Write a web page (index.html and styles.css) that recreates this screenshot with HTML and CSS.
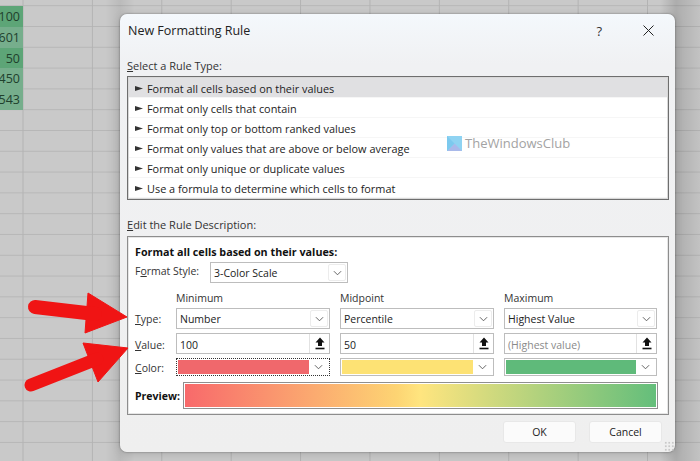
FILE: index.html
```html
<!DOCTYPE html>
<html lang="en">
<head>
<meta charset="utf-8">
<title>New Formatting Rule</title>
<link rel="stylesheet" href="styles.css">
</head>
<body>
<svg width="0" height="0" class="defs">
  <symbol id="chev" viewBox="0 0 10 6"><path d="M1 1l4 4 4-4" fill="none" stroke="#555" stroke-width="1"/></symbol>
  <symbol id="up" viewBox="0 0 10 13"><path d="M5 0.5L9.5 5.5H7V9H3V5.5H0.5Z" fill="#111"/><rect x="0.5" y="10.7" width="9" height="1.6" fill="#111"/></symbol>
</svg>
<main class="sheet">
  <div class="cells">
    <div class="cell dark">100</div>
    <div class="cell">601</div>
    <div class="cell dark">50</div>
    <div class="cell">450</div>
    <div class="cell">543</div>
  </div>
</main>
<section class="dialog">
  <header class="titlebar">
    <span class="title">New Formatting Rule</span>
    <span class="help">?</span>
    <svg class="close" width="11" height="11" viewBox="0 0 11 11"><path d="M0.5 0.5l10 10M10.5 0.5l-10 10" stroke="#222" stroke-width="1"/></svg>
  </header>
  <div class="label"><u>S</u>elect a Rule Type:</div>
  <ul class="rules">
    <li class="rule selected">Format all cells based on their values</li>
    <li class="rule">Format only cells that contain</li>
    <li class="rule">Format only top or bottom ranked values</li>
    <li class="rule">Format only values that are above or below average</li>
    <li class="rule">Format only unique or duplicate values</li>
    <li class="rule">Use a formula to determine which cells to format</li>
  </ul>
  <div class="label second"><u>E</u>dit the Rule Description:</div>
  <div class="desc">
    <div class="desc-title">Format all cells based on their values:</div>
    <div class="style-row">
      <span>F<u>o</u>rmat Style:</span>
      <div class="select style-select"><span>3-Color Scale</span><span class="drop"><svg class="chev"><use href="#chev"/></svg></span></div>
    </div>
    <div class="grid">
      <span></span><span class="head">Minimum</span><span class="head">Midpoint</span><span class="head">Maximum</span>

      <span class="rowlabel"><u>T</u>ype:</span>
      <div class="select"><span>Number</span><span class="drop"><svg class="chev"><use href="#chev"/></svg></span></div>
      <div class="select"><span>Percentile</span><span class="drop"><svg class="chev"><use href="#chev"/></svg></span></div>
      <div class="select"><span>Highest Value</span><span class="drop"><svg class="chev"><use href="#chev"/></svg></span></div>

      <span class="rowlabel low"><u>V</u>alue:</span>
      <div class="select input"><span class="val">100</span><span class="pick"><svg class="up"><use href="#up"/></svg></span></div>
      <div class="select input"><span class="val">50</span><span class="pick"><svg class="up"><use href="#up"/></svg></span></div>
      <div class="select input"><span class="val muted">(Highest value)</span><span class="pick"><svg class="up"><use href="#up"/></svg></span></div>

      <span class="rowlabel low"><u>C</u>olor:</span>
      <div class="colorbox focus"><span class="swatch red"></span><span class="drop"><svg class="chev"><use href="#chev"/></svg></span></div>
      <div class="colorbox"><span class="swatch yellow"></span><span class="drop"><svg class="chev"><use href="#chev"/></svg></span></div>
      <div class="colorbox"><span class="swatch green"></span><span class="drop"><svg class="chev"><use href="#chev"/></svg></span></div>
    </div>
    <div class="preview-row">
      <b>Preview:</b>
      <div class="preview"></div>
    </div>
  </div>
  <footer class="buttons">
    <button class="btn">OK</button>
    <button class="btn">Cancel</button>
  </footer>
  <div class="grip"></div>
</section>
<div class="watermark">
  <svg width="15" height="15" viewBox="0 0 15 15"><rect width="15" height="15" fill="#8fd3f2"/><path d="M0 15L7.5 7.5 15 15Z" fill="#a9b9ea"/><path d="M0 0L7.5 7.5 0 15Z" fill="#7cc9ee"/></svg>
  <span>TheWindowsClub</span>
</div>
<svg class="arrows" width="140" height="110" viewBox="0 0 140 110">
  <g fill="#f01414" stroke="#f01414" stroke-linejoin="round">
    <path d="M88 5L127 29 85 45Z" stroke-width="1"/>
    <path d="M35 19L95 26" stroke-width="14" stroke-linecap="round"/>
    <path d="M83 55L128 60 98 94Z" stroke-width="1"/>
    <path d="M31 97L97 71" stroke-width="13" stroke-linecap="round"/>
  </g>
</svg>
</body>
</html>
```
FILE: styles.css
```css
* { box-sizing: border-box; }
html, body { margin: 0; padding: 0; }
body {
  width: 700px;
  height: 461px;
  overflow: hidden;
  position: relative;
  font-family: "Open Sans", "Noto Sans", sans-serif;
  font-size: 11px;
  color: #1c1c1c;
  background: #c9c9c9;
}
.defs { position: absolute; }
.sheet {
  width: 700px;
  height: 461px;
  padding-top: 6px;
  background-color: #c9c9c9;
  background-image:
    linear-gradient(90deg, rgba(0,0,0,0) 105px, rgba(0,0,0,.07) 120px, rgba(0,0,0,0) 135px),
    linear-gradient(90deg, rgba(0,0,0,0) 660px, rgba(0,0,0,.14) 676px, rgba(0,0,0,.03) 700px),
    linear-gradient(90deg, #b3b3b3 1px, transparent 1px),
    linear-gradient(0deg, #b7b7b7 1px, transparent 1px);
  background-size: 700px 461px, 700px 461px, 69.4px 100%, 100% 20.8px;
  background-position: 0 0, 0 0, 22.5px 0, 0 6.2px;
}
.cells { width: 23px; }
.cell {
  height: 20.8px;
  padding-right: 3px;
  text-align: right;
  font-size: 12.5px;
  line-height: 21px;
  color: #20402c;
  background: #76ae8c;
  white-space: nowrap;
  direction: rtl;
  overflow: hidden;
}
.cell.dark { background: #5da577; }
.dialog {
  position: absolute;
  left: 120px;
  top: 14px;
  width: 555px;
  height: 438px;
  padding: 0 7px;
  border-radius: 7px;
  background: linear-gradient(180deg, #f4f8fc 0, #f0f1f3 50px, #efefef 100%);
  box-shadow: 0 0 2px rgba(0,0,0,.45), 0 2px 10px rgba(0,0,0,.15);
  display: flex;
  flex-direction: column;
}
.titlebar {
  height: 33px;
  display: flex;
  align-items: center;
  margin-bottom: 11px;
  flex: none;
}
.title { font-size: 12.5px; margin-left: 1px; flex: 1; color: #222; }
.help { font-size: 13px; margin-right: 41px; color: #333; }
.close { margin-right: 14px; }
.label { font-size: 11px; line-height: 15px; height: 15px; color: #333; flex: none; }
.label.second { margin-top: 17px; }
.rules {
  list-style: none;
  margin: 3px 0 0;
  padding: 1px 1px 0;
  width: 542px;
  height: 124px;
  background: #fff;
  border: 1px solid #6e6e6e;
  box-shadow: inset 0 0 0 1px #d8d8d8;
  flex: none;
  overflow: hidden;
}
.rule {
  height: 20px;
  padding: 3px 0 0 6px;
  line-height: 16px;
  border-bottom: 1px solid #f6f6f6;
  font-size: 10.9px;
  color: #222;
  white-space: nowrap;
}
.rule::before {
  content: "";
  display: inline-block;
  width: 8px;
  height: 5px;
  margin-right: 4px;
  vertical-align: 2px;
  background: #333;
  clip-path: polygon(0 0, 100% 50%, 0 100%);
}
.rule.selected { background: #e0e0e2; }
.desc {
  margin-top: 4px;
  width: 542px;
  height: 179px;
  background: #fff;
  border: 1px solid #8d8d8d;
  box-shadow: inset 0 0 0 1px #e6e6e6;
  padding: 8px 7px 0 7px;
  flex: none;
}
.desc-title { font-weight: 700; font-size: 10.75px; line-height: 14px; color: #111; }
.style-row { display: flex; align-items: center; height: 21px; margin-top: 3px; gap: 9px; font-size: 10.5px; color: #333; }
.style-row > span { margin-top: -4px; width: 66px; white-space: nowrap; }
.select {
  height: 21px;
  display: flex;
  align-items: center;
  justify-content: space-between;
  padding: 0 1px 0 3px;
  background: #fff;
  border: 1px solid #bdbdbd;
  color: #222;
  font-size: 10.5px;
}
.style-select { width: 138px; }
.drop {
  width: 18px;
  height: 17px;
  flex: none;
  display: flex;
  align-items: center;
  justify-content: center;
  border: 1px solid #ececec;
  border-radius: 2px;
  background: #fff;
}
.chev { width: 9px; height: 6px; }
.grid {
  display: grid;
  grid-template-columns: 31px 154px 154px 153px;
  grid-template-rows: 17px 21px 21px 18px;
  column-gap: 10px;
  row-gap: 4px;
  margin-top: 4px;
  align-items: center;
}
.head { font-size: 10.5px; color: #333; line-height: 14px; align-self: end; margin-bottom: -1px; }
.rowlabel { font-size: 10.5px; color: #333; white-space: nowrap; }
.rowlabel.low { padding-top: 2px; }
.select.input { height: 21px; padding-right: 0; }
.val { padding-top: 2px; }
.pick {
  width: 20px;
  height: 19px;
  flex: none;
  display: flex;
  align-items: center;
  justify-content: center;
  background: #fff;
  border-left: 1px solid #e2e2e2;
}
.up { width: 10px; height: 13px; }
.muted { color: #8a8a8a; }
.colorbox {
  height: 18px;
  display: flex;
  align-items: center;
  padding: 1px;
  border: 1px solid #bdbdbd;
  background: #fff;
}
.colorbox.focus { border: 1px dotted #333; }
.colorbox .drop { width: 19px; height: 14px; border: 0; }
.swatch { flex: 1; height: 14px; }
.red { background: #f0686c; }
.yellow { background: #fde274; }
.green { background: #5fba7a; }
.preview-row { display: flex; align-items: center; gap: 3px; margin-top: 6px; font-size: 10.5px; color: #111; }
.preview-row b { width: 45px; white-space: nowrap; }
.preview {
  width: 475px;
  height: 27px;
  border: 1px solid #8f8f8f;
  outline: 1px solid #fff;
  outline-offset: -2px;
  background: linear-gradient(90deg, #f8696b 0, #fdd473 45%, #ffe57f 50%, #63be7b 100%);
}
.buttons { display: flex; justify-content: flex-end; gap: 13px; margin-top: 6px; margin-right: 6px; }
.btn {
  width: 73px;
  height: 22px;
  padding: 0;
  font: inherit;
  font-size: 10.5px;
  color: #222;
  background: #fbfbfb;
  border: 1px solid #e8e8e8;
  border-radius: 3px;
}
.grip {
  position: absolute;
  right: 1px;
  bottom: 1px;
  width: 10px;
  height: 10px;
  background-image: radial-gradient(#c8c8c8 1px, transparent 1.2px);
  background-size: 3.5px 3.5px;
}
.watermark {
  position: absolute;
  left: 447px;
  top: 134px;
  display: flex;
  align-items: center;
  gap: 3px;
  font-size: 13px;
  color: #a3a3a3;
}
.arrows { position: absolute; left: 0; top: 288px; }
```
